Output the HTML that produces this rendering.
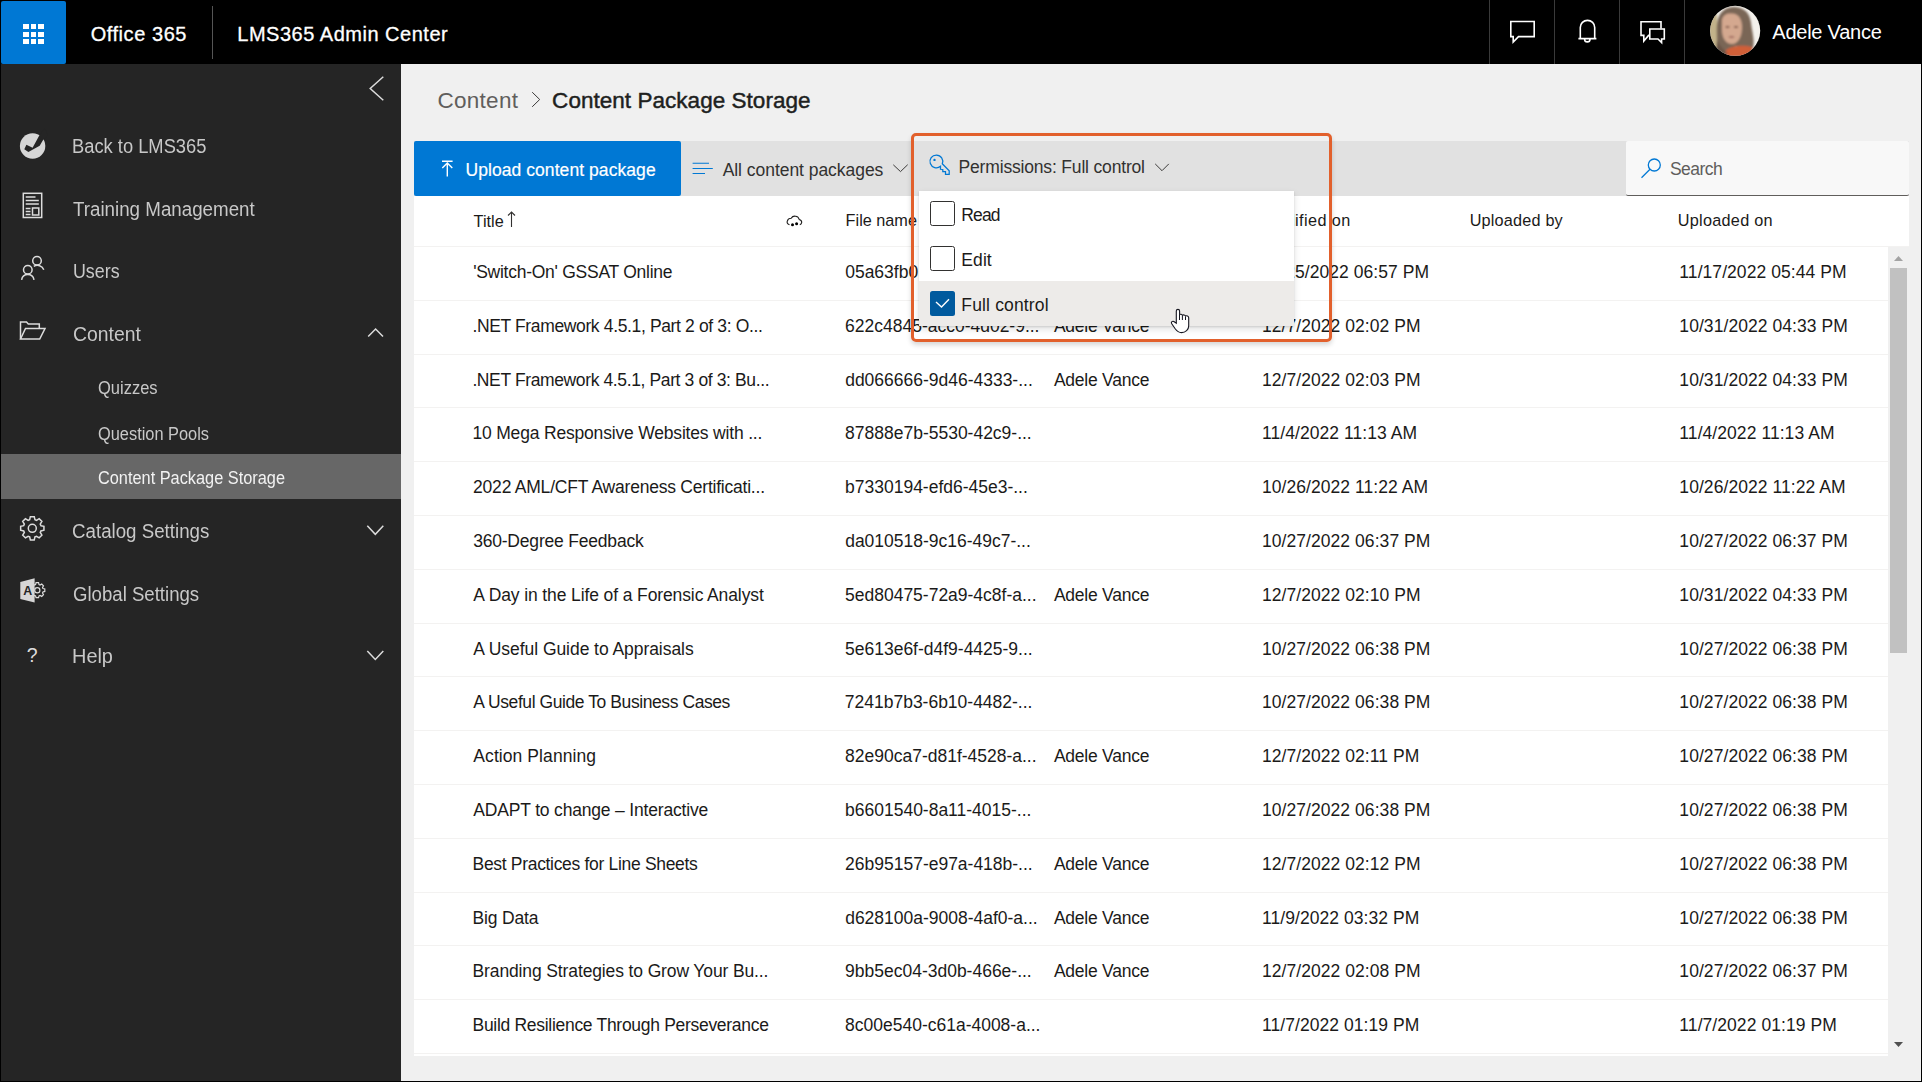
<!DOCTYPE html>
<html><head><meta charset="utf-8"><title>LMS365 Admin Center</title>
<style>
*{margin:0;padding:0;box-sizing:border-box}
html,body{width:1922px;height:1082px;overflow:hidden;background:#000;font-family:"Liberation Sans",sans-serif}
.t{position:absolute;white-space:nowrap;line-height:24px}
.a{position:absolute}
svg{position:absolute;left:0;top:0;overflow:visible}
</style></head><body>
<div class="a" style="left:1px;top:1px;width:65px;height:63px;background:#0078d4;border-radius:2px"></div>
<div class="a" style="left:23.0px;top:24.0px;width:5.8px;height:5px;background:#fff"></div>
<div class="a" style="left:23.0px;top:31.6px;width:5.8px;height:5px;background:#fff"></div>
<div class="a" style="left:23.0px;top:39.2px;width:5.8px;height:5px;background:#fff"></div>
<div class="a" style="left:30.6px;top:24.0px;width:5.8px;height:5px;background:#fff"></div>
<div class="a" style="left:30.6px;top:31.6px;width:5.8px;height:5px;background:#fff"></div>
<div class="a" style="left:30.6px;top:39.2px;width:5.8px;height:5px;background:#fff"></div>
<div class="a" style="left:38.2px;top:24.0px;width:5.8px;height:5px;background:#fff"></div>
<div class="a" style="left:38.2px;top:31.6px;width:5.8px;height:5px;background:#fff"></div>
<div class="a" style="left:38.2px;top:39.2px;width:5.8px;height:5px;background:#fff"></div>
<div class="a" style="left:212px;top:6px;width:1px;height:53px;background:#555"></div>
<div class="a" style="left:1489px;top:0;width:1px;height:64px;background:#3a3a3a"></div>
<div class="a" style="left:1554px;top:0;width:1px;height:64px;background:#3a3a3a"></div>
<div class="a" style="left:1619px;top:0;width:1px;height:64px;background:#3a3a3a"></div>
<div class="a" style="left:1684px;top:0;width:1px;height:64px;background:#3a3a3a"></div>
<svg width="1922" height="64"><g fill="none" stroke="#fff" stroke-width="1.6"><path d="M1510.8 21.5H1534.2V36.6H1518.5L1513.2 42V36.6H1510.8Z"/><path d="M1580.3 38.4V27.5A7.2 7.2 0 0 1 1594.7 27.5V38.4M1578.4 38.6H1596.4M1584.6 39.2A2.7 2.7 0 0 0 1590 39.2"/><path d="M1661 28.5V21.7H1641V35.4H1643.8V41L1648.6 35.4H1649.5"/><path d="M1649.8 29H1664.3V39H1661.6V42.5L1658 39H1649.8Z"/></g></svg>
<svg style="left:1705px;top:0" width="60" height="62" viewBox="1705 0 60 62"><defs><clipPath id="avc"><circle cx="1735.2" cy="30.8" r="25"/></clipPath><filter id="avb" x="-20%" y="-20%" width="140%" height="140%"><feGaussianBlur stdDeviation="1.3"/></filter></defs><g clip-path="url(#avc)"><rect x="1705" y="0" width="60" height="62" fill="#f4f1ec"/><g filter="url(#avb)"><rect x="1708" y="14" width="9" height="34" fill="#c2b28a"/><path d="M1717 24C1718 12 1726 6.5 1735 7C1745 7.5 1750 14 1751 23C1752 32 1755 40 1753 48L1745 50L1736 46L1726 52L1716 50C1718 42 1716 32 1717 24Z" fill="#7a6656"/><path d="M1722 20C1723 14 1728 13 1732 13.5C1738 14 1742 18 1742 27C1742 37 1738 44 1732 44C1726 44 1722 38 1722 30Z" fill="#d4a88f"/><path d="M1726 50C1733 45 1744 45 1752 47L1754 60H1722Z" fill="#d05f38"/><path d="M1717 40C1720 46 1724 50 1728 54L1716 56Z" fill="#6a5546"/><ellipse cx="1727.5" cy="27" rx="2.2" ry="1" fill="#7a5444"/><ellipse cx="1736" cy="27" rx="2.2" ry="1" fill="#7a5444"/><ellipse cx="1731.5" cy="37" rx="3" ry="1.1" fill="#a06a60"/></g></g></svg>
<div class="a" style="left:1px;top:64px;width:400px;height:1017px;background:#252525"></div>
<div class="a" style="left:1px;top:454px;width:400px;height:44.5px;background:#676767"></div>
<svg width="402" height="700"><g fill="none" stroke="#dcdcdc" stroke-width="1.5"><path d="M383.3 76.7L370.2 88.5L383.3 100.3"/><path d="M368.2 336.6L375.6 329L383 336.6"/><path d="M367.3 525.8L375.3 534.3L383.3 525.8"/><path d="M367.3 651L375.3 659.5L383.3 651"/><rect x="23.3" y="193.3" width="18.4" height="24.2"/><path d="M25.7 197H35.5M25.7 200.5H38.8M25.7 204H38.8M25.7 208.5H30.5M25.7 211.5H30.5M25.7 214.5H30.5"/><rect x="32.5" y="208" width="6.3" height="7"/><circle cx="37" cy="260.8" r="4.3"/><path d="M33.8 266.4A6.8 6.8 0 0 1 43.8 269.8"/><circle cx="27.8" cy="269.8" r="4.3"/><path d="M21.6 279.8A6.3 6.3 0 0 1 34 279.8"/><path d="M20.5 339V322H26.5L28.3 324H39.3V328.5"/><path d="M20.5 339L25.5 328.5H45L39.7 339Z"/><circle cx="32.3" cy="528.3" r="4"/><path d="M40.90 525.65L43.94 526.36L43.94 530.24L40.90 530.95L40.25 532.51L41.90 535.16L39.16 537.90L36.51 536.25L34.95 536.90L34.24 539.94L30.36 539.94L29.65 536.90L28.09 536.25L25.44 537.90L22.70 535.16L24.35 532.51L23.70 530.95L20.66 530.24L20.66 526.36L23.70 525.65L24.35 524.09L22.70 521.44L25.44 518.70L28.09 520.35L29.65 519.70L30.36 516.66L34.24 516.66L34.95 519.70L36.51 520.35L39.16 518.70L41.90 521.44L40.25 524.09Z"/></g><path fill="none" stroke="#dcdcdc" stroke-width="1.2" d="M42.94 588.47L44.80 588.95L44.80 591.45L42.94 591.93L42.51 592.96L43.48 594.62L41.72 596.38L40.06 595.41L39.03 595.84L38.55 597.70L36.05 597.70L35.57 595.84L34.54 595.41L32.88 596.38L31.12 594.62L32.09 592.96L31.66 591.93L29.80 591.45L29.80 588.95L31.66 588.47L32.09 587.44L31.12 585.78L32.88 584.02L34.54 584.99L35.57 584.56L36.05 582.70L38.55 582.70L39.03 584.56L40.06 584.99L41.72 584.02L43.48 585.78L42.51 587.44Z"/><circle cx="37.3" cy="590.2" r="2.6" fill="none" stroke="#dcdcdc" stroke-width="1.2"/><path fill="#d6d6d6" d="M20.3 582L34.6 578.3V602.5L20.3 599Z"/><text x="23.2" y="595.2" font-family="Liberation Sans" font-size="12.4" font-weight="700" fill="#252525">A</text><text x="26.8" y="662" font-family="Liberation Sans" font-size="19.5" fill="#dcdcdc">?</text><circle cx="32.6" cy="146" r="12.7" fill="#d6d6d6"/><path d="M39.4 135.3L32.6 147.8L26.4 144.8L24.3 149.2L28.4 151.9L39.7 145.7L43.2 139.8L48 136L45 128Z" fill="#252525"/></svg>
<div class="a" style="left:401px;top:64px;width:1520px;height:1017px;background:#f0f0f0"></div>
<svg width="900" height="120"><path d="M532.2 92.2L539.7 99.5L532.2 106.8" fill="none" stroke="#3b3a39" stroke-width="1"/></svg>
<div class="a" style="left:414px;top:141px;width:1495px;height:55px;background:#e1e1e1"></div>
<div class="a" style="left:414px;top:141px;width:267px;height:55px;background:#0078d4;border-radius:2px"></div>
<svg width="1922" height="200"><g fill="none" stroke="#fff" stroke-width="1.4"><path d="M442 161.2H452.6M447.3 163V176.5M442.3 168L447.3 163L452.3 168"/></g><g fill="none" stroke="#0078d4" stroke-width="1.1"><path d="M692.6 163.3H709M692.6 168.5H712.8M692.6 173.5H705"/></g><path d="M893.3 164.8L900.5 171.6L907.7 164.7" fill="none" stroke="#3b3a39" stroke-width="1"/></svg>
<div class="a" style="left:1626px;top:141px;width:283px;height:55px;background:#f8f8f8;border-bottom:1px solid #605e5c;border-radius:2px"></div>
<svg width="1922" height="200"><g fill="none" stroke="#0078d4" stroke-width="1.3"><circle cx="1654.3" cy="165" r="6"/><path d="M1650 169.3L1641.5 177.8"/></g></svg>
<div class="a" style="left:414px;top:196px;width:1495px;height:860px;background:#fff"></div>
<div class="a" style="left:414px;top:246px;width:1495px;height:1px;background:#f3f2f1"></div>
<svg width="1922" height="260"><path d="M511.5 227V212M508 215.5L511.5 212L515 215.5" fill="none" stroke="#323130" stroke-width="1.1"/><path d="M789.5 224.8C787.5 224 786.8 222.5 787.3 221C787.8 219.3 789.2 218.3 791.2 218.3C792 216.8 793.8 216 795.5 216.2C797.5 216.4 798.8 217.8 799.2 219.4C800.8 219.9 801.8 221 801.7 222.4C801.6 223.6 800.8 224.5 799.8 224.8" fill="none" stroke="#201f1e" stroke-width="1.1"/><circle cx="792.5" cy="224.8" r="1.5" fill="#000"/><circle cx="796.6" cy="223.8" r="1.5" fill="#000"/></svg>
<div class="t" style="left:90.64px;top:22px;font-size:20px;color:#fff;letter-spacing:0.556px;-webkit-text-stroke:0.3px #fff;">Office 365</div>
<div class="t" style="left:237.29px;top:22px;font-size:20px;color:#fff;letter-spacing:0.511px;-webkit-text-stroke:0.3px #fff;">LMS365 Admin Center</div>
<div class="t" style="left:1772.31px;top:20px;font-size:20px;color:#fff;letter-spacing:-0.239px;">Adele Vance</div>
<div class="t" style="left:72.19px;top:134px;font-size:20px;color:#c8c8c8;transform:scaleX(0.9159);transform-origin:0 0;">Back to LMS365</div>
<div class="t" style="left:73.23px;top:197px;font-size:20px;color:#c8c8c8;transform:scaleX(0.9376);transform-origin:0 0;">Training Management</div>
<div class="t" style="left:72.55px;top:259px;font-size:20px;color:#c8c8c8;transform:scaleX(0.8913);transform-origin:0 0;">Users</div>
<div class="t" style="left:72.60px;top:322px;font-size:20px;color:#c8c8c8;transform:scaleX(0.9684);transform-origin:0 0;">Content</div>
<div class="t" style="left:97.71px;top:376px;font-size:18.75px;color:#c8c8c8;transform:scaleX(0.8792);transform-origin:0 0;">Quizzes</div>
<div class="t" style="left:97.71px;top:422px;font-size:18.75px;color:#c8c8c8;transform:scaleX(0.8733);transform-origin:0 0;">Question Pools</div>
<div class="t" style="left:97.70px;top:466px;font-size:18.75px;color:#f2f2f2;transform:scaleX(0.8707);transform-origin:0 0;">Content Package Storage</div>
<div class="t" style="left:72.25px;top:519px;font-size:20px;color:#c8c8c8;transform:scaleX(0.9360);transform-origin:0 0;">Catalog Settings</div>
<div class="t" style="left:72.73px;top:582px;font-size:20px;color:#c8c8c8;transform:scaleX(0.9302);transform-origin:0 0;">Global Settings</div>
<div class="t" style="left:71.95px;top:644px;font-size:20px;color:#c8c8c8;transform:scaleX(0.9954);transform-origin:0 0;">Help</div>
<div class="t" style="left:437.48px;top:89px;font-size:22.5px;color:#605e5c;letter-spacing:0.281px;">Content</div>
<div class="t" style="left:552.10px;top:89px;font-size:22.5px;color:#201f1e;letter-spacing:0.036px;-webkit-text-stroke:0.45px #201f1e;">Content Package Storage</div>
<div class="t" style="left:465.45px;top:158px;font-size:17.5px;color:#fff;letter-spacing:0.068px;-webkit-text-stroke:0.2px #fff;">Upload content package</div>
<div class="t" style="left:722.63px;top:158px;font-size:17.5px;color:#323130;letter-spacing:-0.039px;">All content packages</div>
<div class="t" style="left:1669.88px;top:157px;font-size:17.5px;color:#605e5c;letter-spacing:-0.498px;">Search</div>
<div class="t" style="left:473.58px;top:209px;font-size:16.25px;color:#1b1a19;letter-spacing:-0.001px;">Title</div>
<div class="t" style="left:845.60px;top:208px;font-size:16.25px;color:#1b1a19;letter-spacing:0.000px;">File name</div>
<div class="t" style="left:1053.78px;top:208px;font-size:16.25px;color:#1b1a19;letter-spacing:0.000px;">Modified by</div>
<div class="t" style="left:1262.28px;top:208px;font-size:16.25px;color:#1b1a19;letter-spacing:0.406px;">Modified on</div>
<div class="t" style="left:1469.71px;top:208px;font-size:16.25px;color:#1b1a19;letter-spacing:0.179px;">Uploaded by</div>
<div class="t" style="left:1677.71px;top:208px;font-size:16.25px;color:#1b1a19;letter-spacing:0.273px;">Uploaded on</div>
<div class="t" style="left:473.14px;top:260px;font-size:17.5px;color:#1b1a19;letter-spacing:-0.264px">'Switch-On' GSSAT Online</div>
<div class="t" style="left:845.19px;top:260px;font-size:17.5px;color:#1b1a19;letter-spacing:-0.010px">05a63fb0</div>
<div class="t" style="left:1261.95px;top:260px;font-size:17.5px;color:#1b1a19;letter-spacing:0.063px">11/25/2022 06:57 PM</div>
<div class="t" style="left:1679.35px;top:260px;font-size:17.5px;color:#1b1a19;letter-spacing:0.063px">11/17/2022 05:44 PM</div>
<div class="a" style="left:414px;top:300px;width:1474px;height:1px;background:#f3f2f1"></div>
<div class="t" style="left:472.38px;top:314px;font-size:17.5px;color:#1b1a19;letter-spacing:-0.359px">.NET Framework 4.5.1, Part 2 of 3: O...</div>
<div class="t" style="left:845.11px;top:314px;font-size:17.5px;color:#1b1a19;letter-spacing:-0.010px">622c4845-acc0-4d02-9...</div>
<div class="t" style="left:1053.93px;top:314px;font-size:17.5px;color:#1b1a19;letter-spacing:-0.250px">Adele Vance</div>
<div class="t" style="left:1261.95px;top:314px;font-size:17.5px;color:#1b1a19;letter-spacing:0.063px">12/7/2022 02:02 PM</div>
<div class="t" style="left:1679.35px;top:314px;font-size:17.5px;color:#1b1a19;letter-spacing:0.063px">10/31/2022 04:33 PM</div>
<div class="a" style="left:414px;top:354px;width:1474px;height:1px;background:#f3f2f1"></div>
<div class="t" style="left:472.38px;top:368px;font-size:17.5px;color:#1b1a19;letter-spacing:-0.378px">.NET Framework 4.5.1, Part 3 of 3: Bu...</div>
<div class="t" style="left:845.17px;top:368px;font-size:17.5px;color:#1b1a19;letter-spacing:-0.010px">dd066666-9d46-4333-...</div>
<div class="t" style="left:1053.93px;top:368px;font-size:17.5px;color:#1b1a19;letter-spacing:-0.250px">Adele Vance</div>
<div class="t" style="left:1261.95px;top:368px;font-size:17.5px;color:#1b1a19;letter-spacing:0.063px">12/7/2022 02:03 PM</div>
<div class="t" style="left:1679.35px;top:368px;font-size:17.5px;color:#1b1a19;letter-spacing:0.063px">10/31/2022 04:33 PM</div>
<div class="a" style="left:414px;top:407px;width:1474px;height:1px;background:#f3f2f1"></div>
<div class="t" style="left:472.45px;top:421px;font-size:17.5px;color:#1b1a19;letter-spacing:-0.184px">10 Mega Responsive Websites with ...</div>
<div class="t" style="left:845.12px;top:421px;font-size:17.5px;color:#1b1a19;letter-spacing:-0.010px">87888e7b-5530-42c9-...</div>
<div class="t" style="left:1261.95px;top:421px;font-size:17.5px;color:#1b1a19;letter-spacing:0.063px">11/4/2022 11:13 AM</div>
<div class="t" style="left:1679.35px;top:421px;font-size:17.5px;color:#1b1a19;letter-spacing:0.063px">11/4/2022 11:13 AM</div>
<div class="a" style="left:414px;top:461px;width:1474px;height:1px;background:#f3f2f1"></div>
<div class="t" style="left:473.10px;top:475px;font-size:17.5px;color:#1b1a19;letter-spacing:-0.222px">2022 AML/CFT Awareness Certificati...</div>
<div class="t" style="left:845.08px;top:475px;font-size:17.5px;color:#1b1a19;letter-spacing:-0.010px">b7330194-efd6-45e3-...</div>
<div class="t" style="left:1261.95px;top:475px;font-size:17.5px;color:#1b1a19;letter-spacing:0.063px">10/26/2022 11:22 AM</div>
<div class="t" style="left:1679.35px;top:475px;font-size:17.5px;color:#1b1a19;letter-spacing:0.063px">10/26/2022 11:22 AM</div>
<div class="a" style="left:414px;top:515px;width:1474px;height:1px;background:#f3f2f1"></div>
<div class="t" style="left:473.13px;top:529px;font-size:17.5px;color:#1b1a19;letter-spacing:-0.195px">360-Degree Feedback</div>
<div class="t" style="left:845.17px;top:529px;font-size:17.5px;color:#1b1a19;letter-spacing:-0.010px">da010518-9c16-49c7-...</div>
<div class="t" style="left:1261.95px;top:529px;font-size:17.5px;color:#1b1a19;letter-spacing:0.063px">10/27/2022 06:37 PM</div>
<div class="t" style="left:1679.35px;top:529px;font-size:17.5px;color:#1b1a19;letter-spacing:0.063px">10/27/2022 06:37 PM</div>
<div class="a" style="left:414px;top:569px;width:1474px;height:1px;background:#f3f2f1"></div>
<div class="t" style="left:473.33px;top:583px;font-size:17.5px;color:#1b1a19;letter-spacing:-0.113px">A Day in the Life of a Forensic Analyst</div>
<div class="t" style="left:845.07px;top:583px;font-size:17.5px;color:#1b1a19;letter-spacing:-0.010px">5ed80475-72a9-4c8f-a...</div>
<div class="t" style="left:1053.93px;top:583px;font-size:17.5px;color:#1b1a19;letter-spacing:-0.250px">Adele Vance</div>
<div class="t" style="left:1261.95px;top:583px;font-size:17.5px;color:#1b1a19;letter-spacing:0.063px">12/7/2022 02:10 PM</div>
<div class="t" style="left:1679.35px;top:583px;font-size:17.5px;color:#1b1a19;letter-spacing:0.063px">10/31/2022 04:33 PM</div>
<div class="a" style="left:414px;top:623px;width:1474px;height:1px;background:#f3f2f1"></div>
<div class="t" style="left:473.33px;top:637px;font-size:17.5px;color:#1b1a19;letter-spacing:-0.054px">A Useful Guide to Appraisals</div>
<div class="t" style="left:845.07px;top:637px;font-size:17.5px;color:#1b1a19;letter-spacing:-0.010px">5e613e6f-d4f9-4425-9...</div>
<div class="t" style="left:1261.95px;top:637px;font-size:17.5px;color:#1b1a19;letter-spacing:0.063px">10/27/2022 06:38 PM</div>
<div class="t" style="left:1679.35px;top:637px;font-size:17.5px;color:#1b1a19;letter-spacing:0.063px">10/27/2022 06:38 PM</div>
<div class="a" style="left:414px;top:676px;width:1474px;height:1px;background:#f3f2f1"></div>
<div class="t" style="left:473.33px;top:690px;font-size:17.5px;color:#1b1a19;letter-spacing:-0.422px">A Useful Guide To Business Cases</div>
<div class="t" style="left:844.83px;top:690px;font-size:17.5px;color:#1b1a19;letter-spacing:-0.010px">7241b7b3-6b10-4482-...</div>
<div class="t" style="left:1261.95px;top:690px;font-size:17.5px;color:#1b1a19;letter-spacing:0.063px">10/27/2022 06:38 PM</div>
<div class="t" style="left:1679.35px;top:690px;font-size:17.5px;color:#1b1a19;letter-spacing:0.063px">10/27/2022 06:38 PM</div>
<div class="a" style="left:414px;top:730px;width:1474px;height:1px;background:#f3f2f1"></div>
<div class="t" style="left:473.33px;top:744px;font-size:17.5px;color:#1b1a19;letter-spacing:0.076px">Action Planning</div>
<div class="t" style="left:845.12px;top:744px;font-size:17.5px;color:#1b1a19;letter-spacing:-0.010px">82e90ca7-d81f-4528-a...</div>
<div class="t" style="left:1053.93px;top:744px;font-size:17.5px;color:#1b1a19;letter-spacing:-0.250px">Adele Vance</div>
<div class="t" style="left:1261.95px;top:744px;font-size:17.5px;color:#1b1a19;letter-spacing:0.063px">12/7/2022 02:11 PM</div>
<div class="t" style="left:1679.35px;top:744px;font-size:17.5px;color:#1b1a19;letter-spacing:0.063px">10/27/2022 06:38 PM</div>
<div class="a" style="left:414px;top:784px;width:1474px;height:1px;background:#f3f2f1"></div>
<div class="t" style="left:473.33px;top:798px;font-size:17.5px;color:#1b1a19;letter-spacing:-0.179px">ADAPT to change – Interactive</div>
<div class="t" style="left:845.08px;top:798px;font-size:17.5px;color:#1b1a19;letter-spacing:-0.010px">b6601540-8a11-4015-...</div>
<div class="t" style="left:1261.95px;top:798px;font-size:17.5px;color:#1b1a19;letter-spacing:0.063px">10/27/2022 06:38 PM</div>
<div class="t" style="left:1679.35px;top:798px;font-size:17.5px;color:#1b1a19;letter-spacing:0.063px">10/27/2022 06:38 PM</div>
<div class="a" style="left:414px;top:838px;width:1474px;height:1px;background:#f3f2f1"></div>
<div class="t" style="left:472.55px;top:852px;font-size:17.5px;color:#1b1a19;letter-spacing:-0.316px">Best Practices for Line Sheets</div>
<div class="t" style="left:845.10px;top:852px;font-size:17.5px;color:#1b1a19;letter-spacing:-0.010px">26b95157-e97a-418b-...</div>
<div class="t" style="left:1053.93px;top:852px;font-size:17.5px;color:#1b1a19;letter-spacing:-0.250px">Adele Vance</div>
<div class="t" style="left:1261.95px;top:852px;font-size:17.5px;color:#1b1a19;letter-spacing:0.063px">12/7/2022 02:12 PM</div>
<div class="t" style="left:1679.35px;top:852px;font-size:17.5px;color:#1b1a19;letter-spacing:0.063px">10/27/2022 06:38 PM</div>
<div class="a" style="left:414px;top:892px;width:1474px;height:1px;background:#f3f2f1"></div>
<div class="t" style="left:472.55px;top:906px;font-size:17.5px;color:#1b1a19;letter-spacing:-0.176px">Big Data</div>
<div class="t" style="left:845.17px;top:906px;font-size:17.5px;color:#1b1a19;letter-spacing:-0.010px">d628100a-9008-4af0-a...</div>
<div class="t" style="left:1053.93px;top:906px;font-size:17.5px;color:#1b1a19;letter-spacing:-0.250px">Adele Vance</div>
<div class="t" style="left:1261.95px;top:906px;font-size:17.5px;color:#1b1a19;letter-spacing:0.063px">11/9/2022 03:32 PM</div>
<div class="t" style="left:1679.35px;top:906px;font-size:17.5px;color:#1b1a19;letter-spacing:0.063px">10/27/2022 06:38 PM</div>
<div class="a" style="left:414px;top:945px;width:1474px;height:1px;background:#f3f2f1"></div>
<div class="t" style="left:472.55px;top:959px;font-size:17.5px;color:#1b1a19;letter-spacing:-0.128px">Branding Strategies to Grow Your Bu...</div>
<div class="t" style="left:845.11px;top:959px;font-size:17.5px;color:#1b1a19;letter-spacing:-0.010px">9bb5ec04-3d0b-466e-...</div>
<div class="t" style="left:1053.93px;top:959px;font-size:17.5px;color:#1b1a19;letter-spacing:-0.250px">Adele Vance</div>
<div class="t" style="left:1261.95px;top:959px;font-size:17.5px;color:#1b1a19;letter-spacing:0.063px">12/7/2022 02:08 PM</div>
<div class="t" style="left:1679.35px;top:959px;font-size:17.5px;color:#1b1a19;letter-spacing:0.063px">10/27/2022 06:37 PM</div>
<div class="a" style="left:414px;top:999px;width:1474px;height:1px;background:#f3f2f1"></div>
<div class="t" style="left:472.55px;top:1013px;font-size:17.5px;color:#1b1a19;letter-spacing:-0.298px">Build Resilience Through Perseverance</div>
<div class="t" style="left:845.12px;top:1013px;font-size:17.5px;color:#1b1a19;letter-spacing:-0.010px">8c00e540-c61a-4008-a...</div>
<div class="t" style="left:1261.95px;top:1013px;font-size:17.5px;color:#1b1a19;letter-spacing:0.063px">11/7/2022 01:19 PM</div>
<div class="t" style="left:1679.35px;top:1013px;font-size:17.5px;color:#1b1a19;letter-spacing:0.063px">11/7/2022 01:19 PM</div>
<div class="a" style="left:414px;top:1053px;width:1474px;height:1px;background:#f3f2f1"></div>
<div class="a" style="left:1888px;top:247px;width:21px;height:809px;background:#f0f0f0"></div>
<div class="a" style="left:1890px;top:268px;width:17px;height:385px;background:#c1c1c1"></div>
<svg width="1922" height="1082"><path d="M1894 261H1903L1898.5 256Z" fill="#a3a3a3"/><path d="M1894 1042H1903L1898.5 1047Z" fill="#505050"/></svg>
<div class="a" style="left:914px;top:141px;width:415px;height:55px;background:#e1e1e1"></div>
<svg width="1922" height="200"><path fill="none" stroke="#0078d4" stroke-width="1.25" d="M942.3 163.8A6.4 6.4 0 1 0 940.5 166.3L940.5 169.3L942.8 169.5L942.8 171.5L945.5 171.5L945.5 174.3L949.2 174.3L949.2 170.7Z"/><circle cx="934.5" cy="159.9" r="1.2" fill="#0078d4"/><path d="M1155.2 163.9L1162 170.7L1168.8 163.9" fill="none" stroke="#3b3a39" stroke-width="1"/></svg>
<div class="t" style="left:958.55px;top:155px;font-size:17.5px;color:#323130;letter-spacing:-0.173px;">Permissions: Full control</div>
<div class="a" style="left:919px;top:191px;width:375px;height:135px;background:#fff;box-shadow:0 3px 7px rgba(0,0,0,.13),0 0.6px 1.8px rgba(0,0,0,.11)"></div>
<div class="a" style="left:919px;top:281px;width:375px;height:45px;background:#edebe9"></div>
<div class="a" style="left:930px;top:201.4px;width:25px;height:25px;border:1.5px solid #323130;border-radius:2.5px"></div>
<div class="t" style="left:961.35px;top:203px;font-size:17.5px;color:#1b1a19;letter-spacing:-0.911px;">Read</div>
<div class="a" style="left:930px;top:246px;width:25px;height:25px;border:1.5px solid #323130;border-radius:2.5px"></div>
<div class="t" style="left:961.35px;top:248px;font-size:17.5px;color:#1b1a19;letter-spacing:0.073px;">Edit</div>
<div class="a" style="left:930px;top:291px;width:25px;height:25px;background:#005a9e;border-radius:2.5px"></div>
<svg width="1922" height="400"><path d="M936 302.0L941.5 307.0L949 299.2" fill="none" stroke="#fff" stroke-width="1.4"/></svg>
<div class="t" style="left:961.35px;top:293px;font-size:17.5px;color:#1b1a19;letter-spacing:0.149px;">Full control</div>
<div class="a" style="left:911px;top:133px;width:421px;height:208.5px;border:3px solid #e2602c;border-radius:5px;box-shadow:0 3px 5px rgba(0,0,0,.16)"></div>
<svg width="1922" height="400"><path d="M1176.3 323.2L1176.3 311C1176.3 308.8 1179.6 308.8 1179.6 311L1179.6 314.6C1180.5 314 1181.8 314.2 1182.4 315.2C1183.4 314.6 1185 314.8 1185.5 316C1186.6 315.5 1188.7 316 1188.7 317.8L1188.7 326C1188.7 329.5 1185.5 332.6 1181.5 332.6C1178.7 332.6 1176.5 330.5 1175 328.5L1171.6 323.5C1170.8 322.2 1172.5 320.6 1173.8 321.5Z" fill="#fff" stroke="#15151f" stroke-width="1.1"/><path d="M1179.5 315V320M1182.4 315.5V320M1185.5 316.5V320" fill="none" stroke="#15151f" stroke-width="1"/></svg>
<div class="a" style="left:0;top:0;width:1px;height:1082px;background:#000"></div>
<div class="a" style="left:1921px;top:0;width:1px;height:1082px;background:#000"></div>
<div class="a" style="left:0;top:1081px;width:1922px;height:1px;background:#000"></div>
</body></html>
